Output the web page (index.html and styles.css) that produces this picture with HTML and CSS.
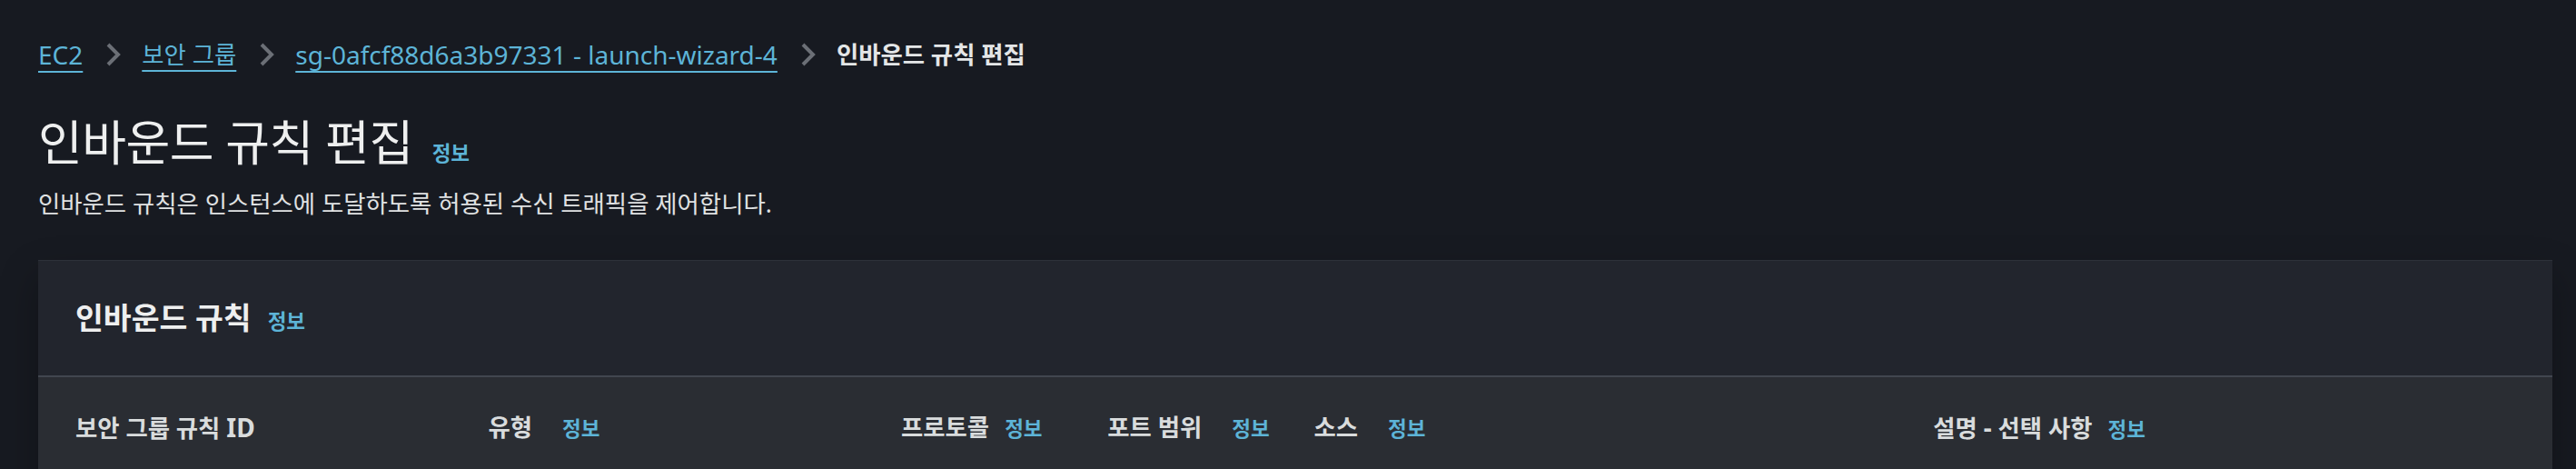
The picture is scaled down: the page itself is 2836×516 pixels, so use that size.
FILE: index.html
```html
<!DOCTYPE html>
<html lang="ko">
<head>
<meta charset="utf-8">
<title>인바운드 규칙 편집</title>
<link rel="stylesheet" href="styles.css">
</head>
<body>
<div class="page">
  <nav class="breadcrumbs">
    <a class="crumb-link lat" href="#">EC2</a>
    <svg class="chev" viewBox="0 0 16 16" aria-hidden="true"><path d="M5.5 2.5l5.5 5.5-5.5 5.5"/></svg>
    <a class="crumb-link" href="#">보안 그룹</a>
    <svg class="chev" viewBox="0 0 16 16" aria-hidden="true"><path d="M5.5 2.5l5.5 5.5-5.5 5.5"/></svg>
    <a class="crumb-link lat" href="#">sg-0afcf88d6a3b97331 - launch-wizard-4</a>
    <svg class="chev" viewBox="0 0 16 16" aria-hidden="true"><path d="M5.5 2.5l5.5 5.5-5.5 5.5"/></svg>
    <span class="crumb-current">인바운드 규칙 편집</span>
  </nav>

  <header class="page-header">
    <div class="title-row">
      <h1 class="page-title">인바운드 규칙 편집</h1>
      <a class="info-link title-info" href="#">정보</a>
    </div>
    <p class="page-desc">인바운드 규칙은 인스턴스에 도달하도록 허용된 수신 트래픽을 제어합니다.</p>
  </header>

  <section class="card">
    <div class="card-header">
      <h2 class="card-title">인바운드 규칙</h2>
      <a class="info-link card-info" href="#">정보</a>
    </div>
    <div class="col-headers">
      <div class="col-head"><span class="label">보안 그룹 규칙 <span class="lat">ID</span></span></div>
      <div class="col-head"><span class="label">유형</span><a class="info-link gap-l" href="#">정보</a></div>
      <div class="col-head"><span class="label">프로토콜</span><a class="info-link gap-s" href="#">정보</a></div>
      <div class="col-head"><span class="label">포트 범위</span><a class="info-link gap-l" href="#">정보</a></div>
      <div class="col-head"><span class="label">소스</span><a class="info-link gap-l" href="#">정보</a></div>
      <div class="col-head"><span class="label">설명 <span class="lat">-</span> 선택 사항</span><a class="info-link gap-s" href="#">정보</a></div>
    </div>
  </section>
</div>
</body>
</html>
```

FILE: styles.css
```css
html, body {
  margin: 0;
  padding: 0;
  background: #171a21;
  height: 100%;
  overflow: hidden;
}

body {
  font-family: "Noto Sans", "Noto Sans CJK KR", sans-serif;
  font-size: 26.4px;
  color: #eaeded;
}

.page {
  padding: 40px 26px 0 42px;
}

.lat {
  font-size: 28px;
}

/* Breadcrumbs */
.breadcrumbs {
  display: flex;
  align-items: center;
  height: 40px;
  line-height: 40px;
  white-space: nowrap;
}

.crumb-link {
  color: #5db4d7;
  text-decoration: underline;
  text-decoration-thickness: 2px;
  text-underline-offset: 7px;
}

.chev {
  width: 32px;
  height: 32px;
  margin: 0 16px 0 17px;
  flex: none;
}

.chev path {
  fill: none;
  stroke: #6b6f76;
  stroke-width: 2;
  stroke-linecap: butt;
  stroke-linejoin: miter;
}

.crumb-current {
  font-weight: 700;
  color: #e4e6e7;
}

/* Page header */
.page-header {
  margin-top: 49px;
}

.title-row {
  display: flex;
  align-items: baseline;
}

.page-title {
  margin: 0;
  font-size: 53px;
  font-weight: 400;
  line-height: 56px;
  letter-spacing: -0.5px;
  color: #eeefef;
}

.info-link {
  color: #5db4d7;
  font-weight: 700;
  font-size: 22.5px;
  text-decoration: none;
}

.title-info {
  margin-left: 21px;
}

.page-desc {
  margin: 21px 0 0;
  line-height: 36px;
  color: #e0e2e3;
}

/* Card */
.card {
  margin-top: 44px;
  background: #2a2d33;
  border-top: 1px solid #2d3139;
  box-shadow: 0 18px 40px rgba(0, 0, 0, 0.28);
  height: 400px;
}

.card-header {
  display: flex;
  align-items: baseline;
  padding: 42px 41px 44px;
  background: #22252d;
  border-bottom: 2px solid #41464f;
}

.card-title {
  margin: 0;
  font-size: 33.5px;
  font-weight: 700;
  line-height: 40px;
  color: #eeefef;
}

.card-info {
  margin-left: 18px;
}

.col-headers {
  display: grid;
  grid-template-columns: 2fr 2fr 1fr 1fr 3fr 3fr;
  padding: 37px 0 0 41px;
}

.col-head {
  display: flex;
  align-items: baseline;
  line-height: 36px;
  white-space: nowrap;
}

.label {
  font-weight: 700;
  color: #d9dcdd;
}

.gap-s {
  margin-left: 17px;
}

.gap-l {
  margin-left: 33px;
}
```
